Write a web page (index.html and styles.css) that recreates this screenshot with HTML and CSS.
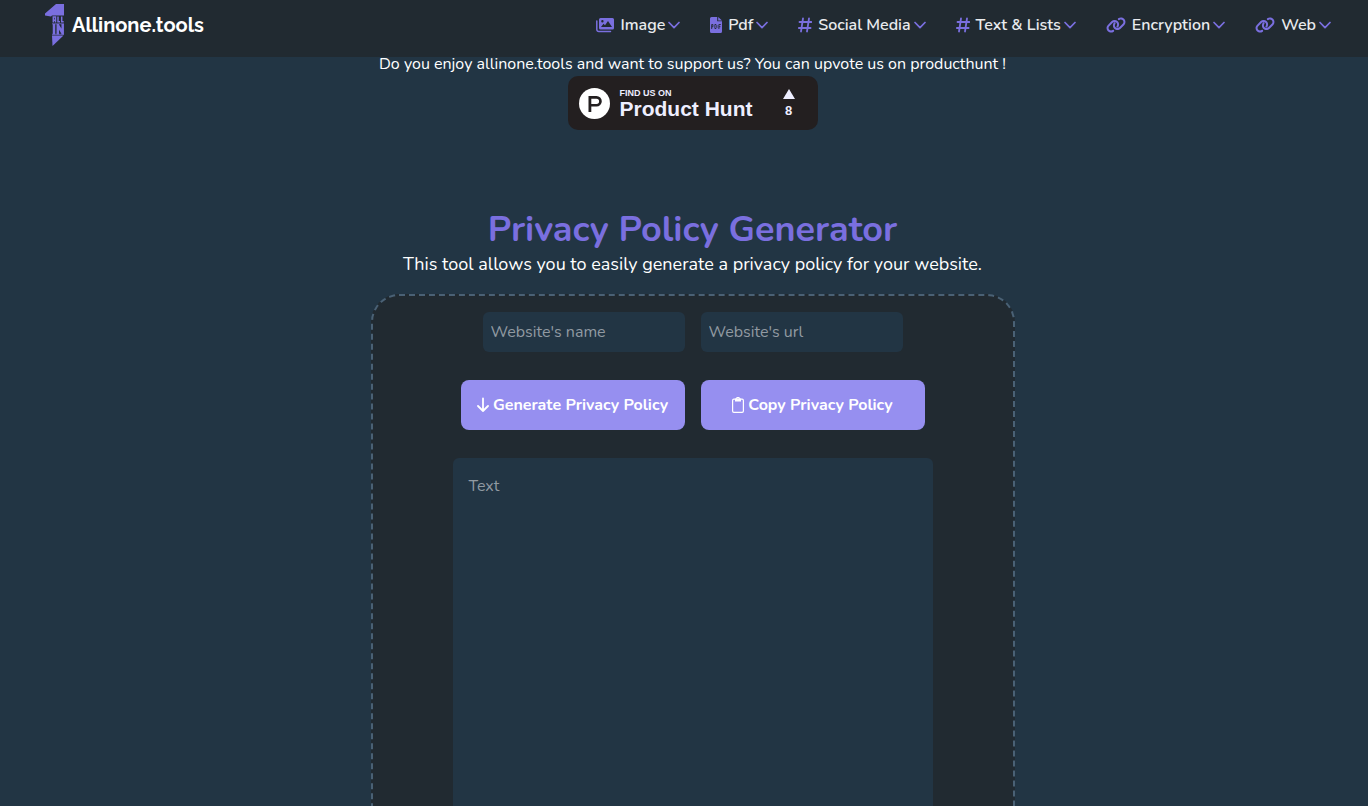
FILE: index.html
```html
<!DOCTYPE html>
<html lang="en">
<head>
<meta charset="utf-8">
<meta name="viewport" content="width=device-width, initial-scale=1">
<title>Privacy Policy Generator - Allinone.tools</title>
<link rel="stylesheet" href="styles.css">
</head>
<body>
<svg class="sprite" aria-hidden="true">
  <symbol id="chevron" viewBox="0 0 12 8"><path d="M1 1.500 6 6.700 11 1.500" fill="none" stroke="currentColor" stroke-width="1.700" stroke-linecap="round" stroke-linejoin="round"/></symbol>
  <symbol id="hash" viewBox="0 0 14 16"><path d="M5 1.500 3 14.500M11 1.500 9 14.500M1.500 5h11.800M.8 11h11.800" fill="none" stroke="currentColor" stroke-width="1.800" stroke-linecap="round"/></symbol>
  <symbol id="link" viewBox="0 0 640 512"><path fill="currentColor" d="M580 260c56-57 56-148 0-204-50-50-129-57-187-15l-1.500 1c-14 10-17 30-7 45s30 17 45 7l1.500-1c32-23 76-20 104 8 31 32 31 83 0 114L422 327c-31 31-82 31-114 0-27-28-31-72-8-104l1.500-1.500c11-14 7-34-7-44s-34-7-45 7l-1 1.500c-41 58-35 137 15 187 56 57 147 57 204 0zM60 252c-57 56-57 147 0 204 50 50 129 56 187 15l1.500-1c14-11 17-31 7-45s-30-18-45-8l-1.500 1c-31 23-75 20-103-8-32-31-32-82 0-114l112-112c32-31 83-31 114 0 28 28 31 72 8 104l-1 1.500c-10 14-7 34 7 44s35 7 45-7l1-1.500c41-58 35-137-15-187-57-56-148-56-205 0z"/></symbol>
</svg>

<header class="topbar">
  <a class="brand" href="#">
    <svg class="brand-mark" viewBox="0 0 19 43" aria-hidden="true">
      <path fill="#7a6fdf" d="M0 12.500V10.500L11 1h8v11.500H7L6 13.500z"/>
      <path fill="#7a6fdf" d="M7 32.500h11.500L7.500 43z"/>
      <g fill="none" stroke="#7a6fdf">
        <path d="M8.300 19.500v-5.500h2.200v5.500M8.300 17.300h2.200M13 13.500v5.300h2M16.700 13.500v5.300h2" stroke-width="1.500"/>
        <path d="M7 20.800h12M7 31.300h12" stroke-width=".8"/>
        <path d="M9 21v10.500M12.800 31.500V21M12.800 22l4.700 8M17.700 31.500V21" stroke-width="2.500"/>
      </g>
    </svg>
    <span>Allinone.tools</span>
  </a>
  <nav class="menu">
    <a class="menu-item" href="#">
      <svg class="icon-wide" viewBox="0 0 18 16" aria-hidden="true"><path d="M.8 4v8.500a2 2 0 0 0 2 2H14.500" fill="none" stroke="currentColor" stroke-width="1.500" stroke-linecap="round"/><path fill="currentColor" fill-rule="evenodd" d="M4.500 1h12a1.500 1.500 0 0 1 1.500 1.500v8.500a1.500 1.500 0 0 1-1.500 1.500h-12A1.500 1.500 0 0 1 3 11V2.500A1.500 1.500 0 0 1 4.500 1zM5 10h11L12 4 9 8.200 7.500 6.700zM5.200 4.200a1.200 1.200 0 1 0 2.400 0a1.200 1.200 0 1 0-2.400 0z"/></svg>
      <span>Image</span><svg class="chevron" aria-hidden="true"><use href="#chevron"/></svg></a>
    <a class="menu-item" href="#">
      <svg class="icon-file" viewBox="0 0 12 16" aria-hidden="true"><path fill="currentColor" d="M1.500 0H7.200v4.300H12V14.500A1.500 1.500 0 0 1 10.500 16h-9A1.500 1.500 0 0 1 0 14.500v-13A1.500 1.500 0 0 1 1.500 0zM8.200 0 12 3.500H8.200z"/><path d="M1.700 12V7.500h1.200v2.300H1.700M4.900 7.500v4H6l.8-.8V8.300L6 7.500zM8.900 12V7.500h1.900M8.900 9.700h1.500" fill="none" stroke="#212a31" stroke-width=".9"/></svg>
      <span>Pdf</span><svg class="chevron" aria-hidden="true"><use href="#chevron"/></svg></a>
    <a class="menu-item" href="#"><svg class="icon-hash" aria-hidden="true"><use href="#hash"/></svg>
      <span>Social Media</span><svg class="chevron" aria-hidden="true"><use href="#chevron"/></svg></a>
    <a class="menu-item" href="#"><svg class="icon-hash" aria-hidden="true"><use href="#hash"/></svg>
      <span>Text &amp; Lists</span><svg class="chevron" aria-hidden="true"><use href="#chevron"/></svg></a>
    <a class="menu-item" href="#"><svg class="icon-link" aria-hidden="true"><use href="#link"/></svg>
      <span>Encryption</span><svg class="chevron" aria-hidden="true"><use href="#chevron"/></svg></a>
    <a class="menu-item" href="#"><svg class="icon-link" aria-hidden="true"><use href="#link"/></svg>
      <span>Web</span><svg class="chevron" aria-hidden="true"><use href="#chevron"/></svg></a>
  </nav>
</header>

<main class="page">
  <p class="support">Do you enjoy allinone.tools and want to support us? You can upvote us on producthunt !</p>
  <a class="hunt" href="#">
    <svg class="hunt-logo" viewBox="0 0 32 32" aria-hidden="true"><circle cx="16.500" cy="15.500" r="15.500" fill="#fff"/><path fill="#231f20" fill-rule="evenodd" d="M10.500 8h8a5.300 5.300 0 0 1 0 10.600H13.300V24h-2.800zM13.300 10.700v5.200h5.200a2.600 2.600 0 0 0 0-5.200z"/></svg>
    <span class="hunt-text"><small>FIND US ON</small><strong>Product Hunt</strong></span>
    <span class="hunt-votes"><svg viewBox="0 0 12 10" aria-hidden="true"><path d="M6 0l6 10H0z" fill="#eef"/></svg><b>8</b></span>
  </a>

  <h1>Privacy Policy Generator</h1>
  <p class="lead">This tool allows you to easily generate a privacy policy for your website.</p>

  <form class="card">
    <div class="row">
      <input type="text" placeholder="Website's name" aria-label="Website's name">
      <input type="text" placeholder="Website's url" aria-label="Website's url">
    </div>
    <div class="row">
      <button type="button"><svg viewBox="0 0 12 16" aria-hidden="true"><path d="M6 1.500v12.500M1 9l5 5 5-5" fill="none" stroke="currentColor" stroke-width="1.800" stroke-linecap="round" stroke-linejoin="round"/></svg>Generate Privacy Policy</button>
      <button type="button"><svg viewBox="0 0 12 16" aria-hidden="true"><rect x=".6" y="2.200" width="10.800" height="13.200" rx="1.300" fill="none" stroke="currentColor" stroke-width="1.200"/><path fill="currentColor" fill-rule="evenodd" d="M3 1.500h1.200a1.800 1.800 0 0 1 3.600 0H9v3H3zM5.300 1.700a.7.7 0 1 0 1.400 0a.7.7 0 1 0-1.400 0z"/></svg>Copy Privacy Policy</button>
    </div>
    <textarea placeholder="Text" aria-label="Text"></textarea>
  </form>
</main>
</body>
</html>
```
FILE: styles.css
```css
:root {
  --bg: #223544;
  --panel: #212a31;
  --accent: #7a6fdf;
  --button: #968ff0;
  --muted: #919aa2;
}

* { box-sizing: border-box; }

body {
  margin: 0;
  height: 100vh;
  overflow: hidden;
  background: var(--bg);
  color: #fff;
  font: 16px/24px Nunito, Lato, "Open Sans", sans-serif;
}

.sprite { position: absolute; width: 0; height: 0; }

.topbar {
  position: fixed;
  inset: 0 0 auto;
  z-index: 1;
  display: flex;
  align-items: center;
  justify-content: space-between;
  height: 57px;
  padding: 0 37px 8px 45px;
  background: var(--panel);
}

.brand {
  display: flex;
  align-items: center;
  gap: 8px;
  color: #fff;
  font: 700 20px/24px Raleway, Lato, sans-serif;
  text-decoration: none;
}
.brand-mark { width: 19px; height: 43px; }

.menu { display: flex; gap: 30px; }
.menu-item {
  display: flex;
  align-items: center;
  color: #e9ebee;
  font-weight: 600;
  text-decoration: none;
}
.menu-item svg { flex: none; color: var(--accent); }
.menu-item span { margin: 0 3px 0 6px; }
.icon-wide { width: 18px; height: 16px; }
.icon-link { width: 20px; height: 16px; }
.icon-file { width: 12px; height: 16px; }
.icon-hash { width: 14px; height: 16px; }
.chevron { width: 12px; height: 8px; }

.page {
  display: flex;
  flex-direction: column;
  align-items: center;
  padding: 52px 0 0 17px;
}

p, h1 { margin: 0; text-align: center; }

.hunt {
  display: flex;
  align-items: center;
  gap: 10px;
  width: 250px;
  height: 54px;
  padding: 2px 23px 0 10px;
  border-radius: 10px;
  background: #231f20;
  color: #eef;
  font-family: "Liberation Sans", Arial, sans-serif;
  text-decoration: none;
}
.hunt-logo { width: 32px; height: 32px; }
.hunt-text { display: flex; flex-direction: column; }
.hunt-text small { font: 700 9px/10px "Liberation Sans", Arial, sans-serif; }
.hunt-text strong { font-size: 21px; line-height: 22px; }
.hunt-votes {
  display: flex;
  flex-direction: column;
  align-items: center;
  gap: 4px;
  margin-left: auto;
}
.hunt-votes svg { width: 12px; height: 10px; }
.hunt-votes b { font-size: 13px; line-height: 16px; }

h1 {
  margin-top: 78px;
  color: var(--accent);
  font-size: 36px;
  line-height: 44px;
}
.lead { font-size: 18px; }

.card {
  display: flex;
  flex-direction: column;
  align-items: center;
  gap: 28px;
  width: 100%;
  max-width: 644px;
  margin-top: 18px;
  padding: 16px;
  border: 2px dashed #4a6175;
  border-radius: 28px;
  background: var(--panel);
}

.row { display: flex; gap: 16px; }

input, textarea {
  border: 0;
  border-radius: 6px;
  background: var(--bg);
  color: #fff;
  font: inherit;
}
input { width: 202px; height: 40px; padding: 0 8px; }
textarea {
  display: block;
  width: 100%;
  max-width: 480px;
  height: 480px;
  padding: 16px;
  resize: none;
}
::placeholder { color: var(--muted); opacity: 1; }

button {
  display: flex;
  align-items: center;
  justify-content: center;
  gap: 4px;
  width: 224px;
  height: 50px;
  padding: 0;
  border: 0;
  border-radius: 8px;
  background: var(--button);
  color: #fff;
  font: inherit;
  font-weight: 700;
}
button svg { width: 12px; height: 16px; }
```
